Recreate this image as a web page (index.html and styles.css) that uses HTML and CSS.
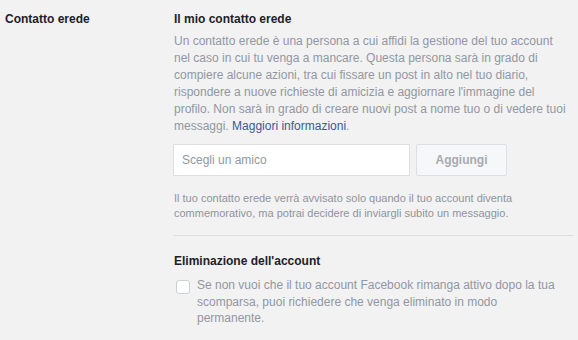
FILE: index.html
```html
<!DOCTYPE html>
<html>
<head>
<meta charset="utf-8">
<link rel="stylesheet" href="styles.css">
</head>
<body>
<div class="row">
  <div class="label">Contatto erede</div>
  <div class="content">
    <h3 class="title">Il mio contatto erede</h3>
    <p class="desc">Un contatto erede è una persona a cui affidi la gestione del tuo account nel caso in cui tu venga a mancare. Questa persona sarà in grado di compiere alcune azioni, tra cui fissare un post in alto nel tuo diario, rispondere a nuove richieste di amicizia e aggiornare l'immagine del profilo. Non sarà in grado di creare nuovi post a nome tuo o di vedere tuoi messaggi. <a href="#" class="link">Maggiori informazioni</a>.</p>
    <div class="picker">
      <input class="friend" type="text" placeholder="Scegli un amico">
      <button class="add" disabled>Aggiungi</button>
    </div>
    <p class="note">Il tuo contatto erede verrà avvisato solo quando il tuo account diventa commemorativo, ma potrai decidere di inviargli subito un messaggio.</p>
    <div class="sep"></div>
    <h3 class="title title-del">Eliminazione dell'account</h3>
    <label class="check">
      <span class="box"></span>
      <span class="check-text">Se non vuoi che il tuo account Facebook rimanga attivo dopo la tua scomparsa, puoi richiedere che venga eliminato in modo permanente.</span>
    </label>
  </div>
</div>
</body>
</html>
```

FILE: styles.css
```css
html, body {
  margin: 0;
  padding: 0;
  background: #f2f2f2;
}
body {
  font-family: "Liberation Sans", Arial, sans-serif;
  font-size: 12px;
  color: #1d2129;
}
.row {
  display: flex;
  padding: 11px 0 0 5px;
}
.label {
  width: 169px;
  flex: none;
  font-weight: bold;
  line-height: 16px;
}
.content {
  width: 396px;
}
.title {
  margin: 0;
  font-size: 12px;
  font-weight: bold;
  line-height: 16px;
}
.title-del {
  margin-top: 17px;
}
.desc {
  margin: 6px 0 0;
  color: #9197a3;
  line-height: 17px;
}
.link {
  color: #3b5998;
  text-decoration: none;
}
.picker {
  display: flex;
  gap: 6px;
  margin-top: 9px;
  margin-left: -1px;
}
.friend {
  box-sizing: border-box;
  width: 237px;
  height: 32px;
  margin: 0;
  border: 1px solid #dddfe2;
  background: #fff;
  padding: 0 8px;
  font-family: inherit;
  font-size: 12px;
  color: #1d2129;
}
.friend::placeholder {
  color: #9197a3;
}
.add {
  box-sizing: border-box;
  width: 91px;
  height: 32px;
  margin: 0;
  border: 1px solid #dddfe2;
  border-radius: 2px;
  background: #f6f7f9;
  color: #a7abb1;
  font-family: inherit;
  font-size: 12px;
  font-weight: bold;
}
.note {
  margin: 15px 0 0;
  font-size: 11px;
  line-height: 15px;
  color: #90949c;
}
.sep {
  margin: 14px -4px 0 0;
  border-top: 1px solid #dddfe2;
}
.check {
  display: flex;
  align-items: flex-start;
  gap: 7px;
  margin-top: 8px;
  color: #9197a3;
  line-height: 16.5px;
}
.box {
  flex: none;
  box-sizing: border-box;
  width: 14px;
  height: 14px;
  margin: 3px 0 0 2px;
  border: 1px solid #ccd0d5;
  border-radius: 3px;
  background: #fff;
}
.check-text {
  width: 362px;
}
```
